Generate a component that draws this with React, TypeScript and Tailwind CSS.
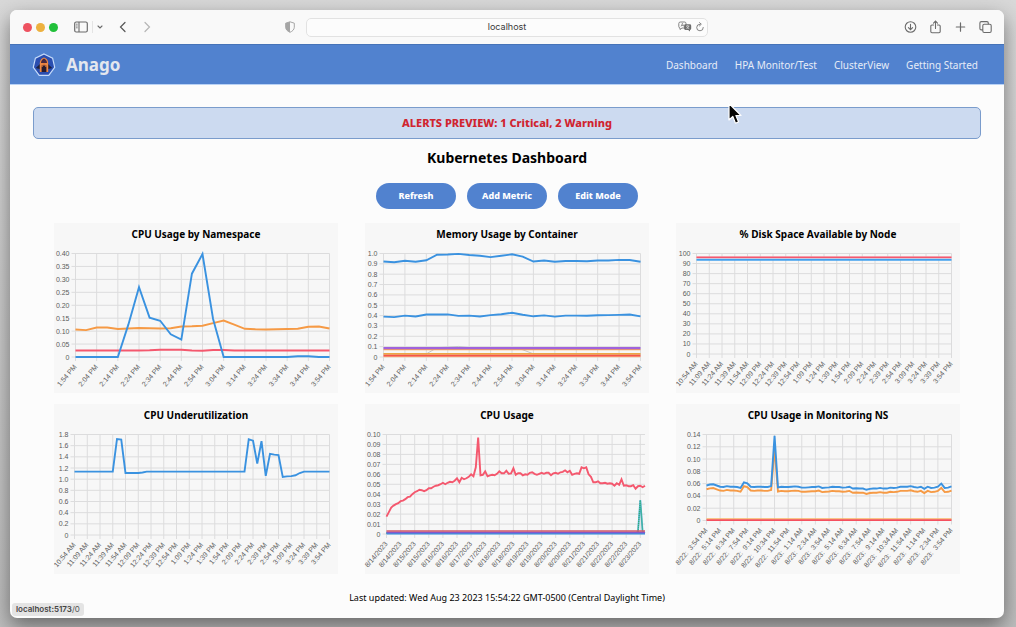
import React from 'react';

type Series = {
  color: string;
  values: number[];
  width?: number;
  dash?: string;
  opacity?: number;
};

type ChartSpec = {
  title: string;
  left: number;
  right: number;
  bottom: number;
  max: number;
  yLabels: string[];
  xLabels: string[];
  xStep: number;
  count: number;
  series: Series[];
};

const BLUE = '#3a92e0';
const ORANGE = '#f69a45';
const RED = '#f4586e';
const PURPLE = '#a063dc';

const flat = (value: number, count: number): number[] => Array.from({ length: count }, () => value);

const clock = (start: number, step: number, count: number): string[] =>
  Array.from({ length: count }, (_, i) => {
    const t = start + step * i;
    const h = Math.floor(t / 60) % 24;
    const m = String(t % 60).padStart(2, '0');
    return `${h % 12 === 0 ? 12 : h % 12}:${m} ${h < 12 ? 'AM' : 'PM'}`;
  });

const monitoringLabels = clock(15 * 60 + 54, 80, 19).map((label, i) => `${i < 7 ? '8/22' : '8/23'}:\u00a0 ${label}`);

const dayLabels = Array.from({ length: 19 }, (_, i) => `8/${14 + Math.floor(i / 2)}/2023`);

const monitoringBlue = [
  0.057, 0.0585, 0.059, 0.057, 0.055, 0.0545, 0.056, 0.055, 0.055, 0.0545, 0.053, 0.062, 0.0605, 0.055, 0.0545,
  0.055, 0.055, 0.0545, 0.0545, 0.056, 0.138, 0.054, 0.055, 0.0545, 0.0545, 0.055, 0.0555, 0.055, 0.0535, 0.0535,
  0.054, 0.0545, 0.0545, 0.0555, 0.053, 0.0535, 0.054, 0.055, 0.0545, 0.0545, 0.0535, 0.054, 0.055, 0.052, 0.0525,
  0.052, 0.052, 0.05, 0.0515, 0.052, 0.052, 0.053, 0.052, 0.052, 0.0535, 0.053, 0.0535, 0.055, 0.055, 0.055, 0.056,
  0.0545, 0.0535, 0.055, 0.0515, 0.055, 0.053, 0.0535, 0.055, 0.06, 0.053, 0.0535, 0.0555,
];

const charts: ChartSpec[] = [
  {
    title: 'CPU Usage by Namespace',
    left: 21.5,
    right: 275.5,
    bottom: 112,
    max: 0.4,
    yLabels: ['0', '0.05', '0.10', '0.15', '0.20', '0.25', '0.30', '0.35', '0.40'],
    xLabels: clock(13 * 60 + 54, 10, 13),
    xStep: 2,
    count: 25,
    series: [
      {
        color: RED,
        values: [...flat(0.025, 7), 0.026, 0.028, 0.028, 0.028, 0.025, 0.024, 0.027, 0.027, ...flat(0.025, 10)],
      },
      {
        color: ORANGE,
        values: [
          0.106, 0.104, 0.114, 0.114, 0.108, 0.11, 0.112, 0.111, 0.11, 0.111, 0.118, 0.119, 0.121, 0.131, 0.141,
          0.125, 0.109, 0.107, 0.106, 0.107, 0.108, 0.109, 0.117, 0.118, 0.11,
        ],
      },
      {
        color: BLUE,
        values: [
          ...flat(0, 5), 0.126, 0.27, 0.152, 0.14, 0.088, 0.067, 0.322, 0.398, 0.147, ...flat(0, 7), 0.003, 0.003, 0, 0,
        ],
      },
    ],
  },
  {
    title: 'Memory Usage by Container',
    left: 18.5,
    right: 275.5,
    bottom: 112,
    max: 1,
    yLabels: ['0', '0.1', '0.2', '0.3', '0.4', '0.5', '0.6', '0.7', '0.8', '0.9', '1.0'],
    xLabels: clock(13 * 60 + 54, 10, 13),
    xStep: 2,
    count: 25,
    series: [
      { color: '#c4c6c9', width: 1, values: [...flat(0.03, 5), 0.09, 0.095, 0.102, ...flat(0.09, 5), 0.07, ...flat(0.03, 11)] },
      { color: '#f9bd83', width: 1.2, values: flat(0.004, 25) },
      { color: '#eda644', width: 1.6, values: flat(0.03, 25) },
      { color: '#f5544c', width: 1.8, values: flat(0.014, 25) },
      { color: '#f9a356', width: 1.4, values: flat(0.071, 25) },
      { color: PURPLE, width: 2.4, values: flat(0.086, 25) },
      {
        color: BLUE,
        values: [
          0.39, 0.385, 0.4, 0.392, 0.41, 0.41, 0.412, 0.397, 0.4, 0.392, 0.405, 0.413, 0.427, 0.408, 0.393, 0.402,
          0.39, 0.4, 0.4, 0.398, 0.403, 0.405, 0.407, 0.41, 0.392,
        ],
      },
      {
        color: BLUE,
        values: [
          0.922, 0.915, 0.93, 0.92, 0.935, 0.988, 0.99, 0.996, 0.985, 0.978, 0.965, 0.978, 0.992, 0.97, 0.922, 0.932,
          0.92, 0.928, 0.928, 0.925, 0.932, 0.932, 0.938, 0.937, 0.92,
        ],
      },
    ],
  },
  {
    title: '% Disk Space Available by Node',
    left: 20.5,
    right: 275.5,
    bottom: 109,
    max: 100,
    yLabels: ['0', '10', '20', '30', '40', '50', '60', '70', '80', '90', '100'],
    xLabels: clock(10 * 60 + 54, 15, 21),
    xStep: 1,
    count: 21,
    series: [
      { color: '#fbd0d6', width: 3, values: flat(95.6, 21) },
      { color: RED, width: 1.6, values: flat(96.3, 21) },
      { color: '#41a1ee', width: 2, values: flat(93.7, 21) },
    ],
  },
  {
    title: 'CPU Underutilization',
    left: 20.5,
    right: 275.5,
    bottom: 109,
    max: 1.8,
    yLabels: ['0', '0.2', '0.4', '0.6', '0.8', '1.0', '1.2', '1.4', '1.6', '1.8'],
    xLabels: clock(10 * 60 + 54, 15, 21),
    xStep: 3,
    count: 61,
    series: [
      {
        color: BLUE,
        values: [
          ...flat(1.135, 10), 1.72, 1.71, 1.11, 1.11, 1.11, 1.11, 1.12, ...flat(1.135, 24), 1.715, 1.69, 1.28, 1.68,
          1.06, 1.455, 1.44, 1.43, 1.04, 1.05, 1.055, 1.07, 1.11, ...flat(1.135, 7),
        ],
      },
    ],
  },
  {
    title: 'CPU Usage',
    left: 21.5,
    right: 280,
    bottom: 108,
    max: 0.1,
    yLabels: ['0', '0.01', '0.02', '0.03', '0.04', '0.05', '0.06', '0.07', '0.08', '0.09', '0.10'],
    xLabels: dayLabels,
    xStep: 6,
    count: 111,
    series: [
      { color: '#5fb2ee', width: 1.8, values: [...flat(0.001, 107), 0.002, 0.034, 0.002, 0.001] },
      { color: '#22b04c', width: 1.4, dash: '1 1', values: [...flat(0.001, 107), 0.002, 0.034, 0.002, 0.001] },
      { color: '#3a92e0', width: 1.6, values: flat(0.0003, 111) },
      { color: '#8656c8', width: 1.6, values: flat(0.0016, 111) },
      { color: '#d2586a', width: 1.4, values: flat(0.003, 111) },
      {
        color: RED,
        values: [
          0.0175, 0.022, 0.0265, 0.0285, 0.03, 0.031, 0.033, 0.0335, 0.035, 0.037, 0.0375, 0.04, 0.042, 0.043, 0.0445,
          0.044, 0.043, 0.044, 0.046, 0.046, 0.0475, 0.0485, 0.049, 0.05, 0.0515, 0.05, 0.0515, 0.0525, 0.052, 0.0535,
          0.056, 0.052, 0.0565, 0.055, 0.056, 0.0575, 0.06, 0.058, 0.067, 0.097, 0.059, 0.0595, 0.063, 0.058, 0.059,
          0.0595, 0.059, 0.0605, 0.063, 0.061, 0.061, 0.0635, 0.0605, 0.061, 0.066, 0.0595, 0.061, 0.061, 0.059, 0.06,
          0.0595, 0.0615, 0.062, 0.0605, 0.0595, 0.0605, 0.0615, 0.0605, 0.0615, 0.0615, 0.059, 0.061, 0.0615, 0.0605,
          0.062, 0.0625, 0.064, 0.062, 0.0635, 0.0595, 0.0605, 0.061, 0.0605, 0.067, 0.066, 0.067, 0.06, 0.0575, 0.052,
          0.052, 0.053, 0.051, 0.051, 0.0515, 0.0505, 0.051, 0.0505, 0.0485, 0.051, 0.0495, 0.055, 0.0485, 0.049,
          0.048, 0.048, 0.049, 0.0455, 0.048, 0.0485, 0.047, 0.0485,
        ],
      },
    ],
  },
  {
    title: 'CPU Usage in Monitoring NS',
    left: 30.5,
    right: 275.5,
    bottom: 94.5,
    max: 0.14,
    yLabels: ['0', '0.02', '0.04', '0.06', '0.08', '0.10', '0.12', '0.14'],
    xLabels: monitoringLabels,
    xStep: 4,
    count: 73,
    series: [
      { color: '#f9b566', width: 1.4, values: flat(0.0024, 73) },
      { color: '#f5505f', width: 1.6, values: flat(0.0006, 73) },
      { color: ORANGE, values: monitoringBlue.map((v, i) => (v > 0.1 ? 0.118 : i < 20 ? v - 0.0062 : v - 0.0068)) },
      { color: BLUE, values: monitoringBlue },
    ],
  },
];

const TOP = 8.5;

function LineChart({ spec }: { spec: ChartSpec }) {
  const { left, right, bottom, max, yLabels, xLabels, xStep, count, series } = spec;
  const x = (i: number) => left + ((right - left) * i) / (count - 1);
  const y = (v: number) => bottom - ((bottom - TOP) * v) / max;
  return (
    <svg viewBox="0 0 284 148" className="block h-auto w-full overflow-visible" role="img" aria-label={spec.title}>
      <g stroke="#dcdcdd" strokeWidth="1">
        {yLabels.map((label, i) => {
          const py = y((max * i) / (yLabels.length - 1));
          return <line key={label} x1={left - 4} x2={right} y1={py} y2={py} />;
        })}
        {xLabels.map((_, i) => (
          <line key={i} x1={x(i * xStep)} x2={x(i * xStep)} y1={TOP} y2={bottom + 4} />
        ))}
      </g>
      <g fill="#5c5c5c" fontSize="7" fontFamily="'Liberation Sans', Arial, sans-serif" textAnchor="end">
        {yLabels.map((label, i) => (
          <text key={label} x={left - 6} y={y((max * i) / (yLabels.length - 1)) + 2.5}>
            {label}
          </text>
        ))}
        {xLabels.map((label, i) => (
          <text key={i} transform={`translate(${x(i * xStep) + 1.5} ${bottom + 10}) rotate(-50)`}>
            {label}
          </text>
        ))}
      </g>
      {series.map((s, i) => (
        <polyline
          key={i}
          fill="none"
          stroke={s.color}
          strokeWidth={s.width ?? 1.9}
          strokeDasharray={s.dash}
          points={s.values.map((v, j) => `${x(j).toFixed(2)},${y(v).toFixed(2)}`).join(' ')}
        />
      ))}
    </svg>
  );
}

function Logo() {
  return (
    <svg width="24" height="24" viewBox="0 0 24 24" aria-hidden="true">
      <path d="M12 1 20.600 5.100 22.700 14.400 16.800 22.400H7.200L1.300 14.400 3.400 5.100Z" fill="#2a4eb0" stroke="#c5dbfa" strokeWidth="1.200" />
      <path d="M3.800 15 8 11V16L5.500 15.600ZM20.200 15 16 11V16L18.500 15.600Z" fill="#1d2140" />
      <path d="M7.800 19V10C7.800 7 9.800 5.200 12 4.600 14.200 5.200 16.200 7 16.200 10V19Z" fill="#ee8842" />
      <path d="M9 10C9 7.800 10.300 6.200 12 5.400 13.700 6.200 15 7.800 15 10Z" fill="#46283f" />
      <path d="M10.800 10.500H13.200V12.500H10.800Z" fill="#d9773e" />
      <path d="M9.600 12.500H14.400V19H9.600Z" fill="#261b2e" />
      <path d="M9.600 12.500H10.600V14H9.600ZM13.400 12.500H14.400V14H13.400Z" fill="#ee8842" />
    </svg>
  );
}

function Toolbar() {
  return (
    <div className="grid h-[34px] grid-cols-[1fr_402px_1fr] items-center bg-[#f9f9f9]">
      <div className="flex items-center justify-between pr-[11px] pl-[13px] text-[#6b6b6b]">
        <div className="flex items-center">
          <div className="flex gap-1">
            <span className="size-[9px] rounded-full bg-[#ee5260]" />
            <span className="size-[9px] rounded-full bg-[#edb13f]" />
            <span className="size-[9px] rounded-full bg-[#22c03a]" />
          </div>
          <button type="button" aria-label="Sidebar" className="ml-4">
            <svg width="14" height="12" viewBox="0 0 14 12" fill="none" stroke="currentColor" className="block">
              <rect x="0.7" y="1" width="12.600" height="10" rx="1.500" strokeWidth="1.200" />
              <path d="M5 1V11" strokeWidth="1.100" />
              <path d="M2 3.200H3.700M2 5H3.700M2 6.800H3.700" strokeWidth="0.800" />
            </svg>
          </button>
          <span className="ml-1 h-3 w-px bg-[#e4e4e4]" />
          <button type="button" aria-label="Tab groups" className="ml-1">
            <svg width="6" height="6" viewBox="0 0 6 6" fill="none" stroke="currentColor" strokeWidth="1.100" strokeLinecap="round" className="block">
              <path d="M1 2 3 4 5 2" />
            </svg>
          </button>
          <button type="button" aria-label="Back" className="ml-4">
            <svg width="8" height="12" viewBox="0 0 8 12" fill="none" stroke="#555" strokeWidth="1.200" strokeLinecap="round" className="block">
              <path d="M6 1.500 1.500 6 6 10.500" />
            </svg>
          </button>
          <button type="button" aria-label="Forward" className="ml-4">
            <svg width="8" height="12" viewBox="0 0 8 12" fill="none" stroke="#b5b5b5" strokeWidth="1.200" strokeLinecap="round" className="block">
              <path d="M2 1.500 6.500 6 2 10.500" />
            </svg>
          </button>
        </div>
        <button type="button" aria-label="Privacy report">
          <svg width="10" height="12" viewBox="0 0 10 12" className="block">
            <path d="M5 0.800 9.300 2.200V6.200C9.300 8.600 7.400 10.300 5 11.300 2.600 10.300 0.700 8.600 0.700 6.200V2.200Z" fill="none" stroke="#a5a5a5" strokeWidth="1" />
            <path d="M5 0.800V11.300C2.600 10.300 0.700 8.600 0.700 6.200V2.200Z" fill="#a5a5a5" />
          </svg>
        </button>
      </div>
      <div className="flex h-[19px] items-center rounded-[5px] border border-[#e2e2e2] bg-[#fcfcfc] pr-[3px] pl-[29px]">
        <input
          type="text"
          aria-label="Address"
          defaultValue="localhost"
          className="min-w-0 flex-1 bg-transparent text-center font-['Inter',sans-serif] text-[9px] leading-4 text-[#3a3a3a] outline-none"
        />
        <button type="button" aria-label="Translate">
          <svg width="14" height="12" viewBox="0 0 14 12" className="block">
            <path d="M2.500 1H6.500Q8 1 8 2.500V5.500Q8 7 6.500 7H4L2 8.500V7Q0.800 6.800 0.800 5.500V2.500Q0.800 1 2.500 1Z" fill="none" stroke="#777" strokeWidth="0.900" />
            <path d="M3 5.500 4.400 2.300 5.800 5.500M3.500 4.500H5.300" fill="none" stroke="#777" strokeWidth="0.700" />
            <path d="M7.500 3.300H11.800Q13.200 3.300 13.200 4.700V7.600Q13.200 9 12 9V10.600L10.200 9H7.500Q6.100 9 6.100 7.600V4.700Q6.100 3.300 7.500 3.300Z" fill="#6c6c6c" />
            <path d="M8 5H11.400M9.700 4.200V5M8.300 7.800Q10.600 7 10.800 5M8.600 5.400Q9.300 7.200 11.300 7.800" fill="none" stroke="#eee" strokeWidth="0.600" />
          </svg>
        </button>
        <button type="button" aria-label="Reload" className="ml-1">
          <svg width="8" height="10" viewBox="0 0 8 10" fill="none" stroke="#777" strokeWidth="0.900" strokeLinecap="round" className="block">
            <path d="M7.300 5.500A3.300 3.300 0 1 1 4 2.200M3.500 0.600 5.300 2.200 3.500 3.900" />
          </svg>
        </button>
      </div>
      <div className="flex items-center justify-end gap-3 pr-3 text-[#6b6b6b]">
        <button type="button" aria-label="Downloads">
          <svg width="13" height="14" viewBox="0 0 13 14" fill="none" stroke="currentColor" strokeWidth="1.100" strokeLinecap="round" className="block">
            <circle cx="6.500" cy="7" r="5.300" />
            <path d="M6.500 4.200V9.600M4.400 7.700 6.500 9.700 8.600 7.700" />
          </svg>
        </button>
        <button type="button" aria-label="Share">
          <svg width="13" height="14" viewBox="0 0 13 14" fill="none" stroke="currentColor" strokeWidth="1.100" strokeLinecap="round" className="block">
            <path d="M4.500 5H3Q1.800 5 1.800 6.200V11.600Q1.800 12.800 3 12.800H10Q11.200 12.800 11.200 11.600V6.200Q11.200 5 10 5H8.500M6.500 8.500V1.200M4.500 3.100 6.500 1.100 8.500 3.100" />
          </svg>
        </button>
        <button type="button" aria-label="New tab">
          <svg width="13" height="14" viewBox="0 0 13 14" fill="none" stroke="currentColor" strokeWidth="1.200" strokeLinecap="round" className="block">
            <path d="M6.500 2.800V11.200M2.300 7H10.700" />
          </svg>
        </button>
        <button type="button" aria-label="Tab overview">
          <svg width="13" height="14" viewBox="0 0 13 14" fill="none" stroke="currentColor" strokeWidth="1.100" className="block">
            <rect x="3.800" y="4.300" width="8.400" height="8.200" rx="1.400" />
            <path d="M3.800 9.900H2.300Q0.900 9.900 0.900 8.500V3Q0.900 1.600 2.300 1.600H7.900Q9.300 1.600 9.300 3V4.300" />
          </svg>
        </button>
      </div>
    </div>
  );
}

export default function App() {
  return (
    <div className="flex min-h-screen flex-col bg-[#d6d6d6] bg-linear-to-b from-[#d8d8d8] to-[#bdbdbd] pt-[10px] pr-3 pb-[10px] pl-[10px] font-['Noto_Sans',sans-serif]">
      <div className="relative flex flex-1 flex-col overflow-hidden rounded-[7px] bg-[#fcfcfc] shadow-[0_8px_20px_rgba(0,0,0,0.45)]">
        <Toolbar />
        <header className="flex h-[41px] items-center justify-between border-t border-b border-t-[#4673b8] border-b-[#b9d2f5] bg-[#5182cf] pr-[26px] pl-[22px]">
          <div className="flex items-center gap-[10px]">
            <Logo />
            <span className="text-[17px] leading-6 font-bold text-[#e4e7ee]">Anago</span>
          </div>
          <nav className="flex gap-[17px] text-[10px] leading-4 text-[#e6ecf7]">
            <a href="#dashboard">Dashboard</a>
            <a href="#hpa">HPA Monitor/Test</a>
            <a href="#cluster">ClusterView</a>
            <a href="#start">Getting Started</a>
          </nav>
        </header>
        <main className="flex flex-col items-stretch">
          <div className="mx-[23px] mt-[22px] flex h-8 items-center justify-center rounded-[5px] border border-[#7a9ccc] bg-[#ccdaf0] text-[11px] leading-4 font-extrabold text-[#d0242f]">
            ALERTS PREVIEW: 1 Critical, 2 Warning
          </div>
          <h1 className="mt-[9px] text-center text-[14px] leading-5 font-bold text-black">Kubernetes Dashboard</h1>
          <div className="mt-[15px] flex justify-center gap-[11px]">
            {['Refresh', 'Add Metric', 'Edit Mode'].map((label) => (
              <button
                key={label}
                type="button"
                className="h-[26px] w-[80px] rounded-full bg-[#5182cf] text-[9px] leading-4 font-extrabold text-white"
              >
                {label}
              </button>
            ))}
          </div>
          <div className="mx-[44px] mt-[14px] grid grid-cols-3 gap-x-[27px] gap-y-[11px]">
            {charts.map((spec) => (
              <section key={spec.title} className="bg-[#f7f7f7]">
                <h2 className="h-[22px] text-center text-[10px] leading-[22px] font-bold text-black">{spec.title}</h2>
                <LineChart spec={spec} />
              </section>
            ))}
          </div>
          <p className="mt-4 mb-3 text-center text-[9px] leading-4 text-black">
            Last updated: Wed Aug 23 2023 15:54:22 GMT-0500 (Central Daylight Time)
          </p>
        </main>
        <div className="absolute bottom-[2px] left-[2px] rounded-[3px] bg-[#e4e4e4] px-1 font-['Inter',sans-serif] text-[8px] leading-[13px] text-[#555]">
          <span className="font-semibold text-[#444]">localhost:5173</span>/0
        </div>
        <svg width="16" height="24" viewBox="0 0 16 24" className="absolute top-[92px] left-[717px]" aria-hidden="true">
          <path d="M2 1.500V18L5.800 14.500 8.500 21.200 11.600 19.900 8.900 13.500H14Z" fill="#050505" stroke="#fff" strokeWidth="1.200" strokeLinejoin="round" />
        </svg>
      </div>
    </div>
  );
}
